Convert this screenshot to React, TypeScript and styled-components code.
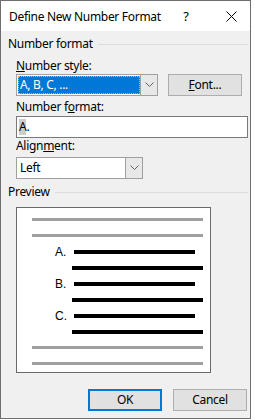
import styled, { createGlobalStyle } from "styled-components";

const GlobalStyle = createGlobalStyle`
  html, body {
    margin: 0;
    padding: 0;
    background: #fff;
  }
  body {
    font-family: "Noto Sans", "Segoe UI", sans-serif;
    font-size: 12px;
    letter-spacing: -0.3px;
    color: #000;
  }
`;

const Chevron = () => (
  <svg width="9" height="6" viewBox="0 0 9 6">
    <polyline points="0.5,0.5 4.5,4.5 8.5,0.5" fill="none" stroke="#606060" strokeWidth="1" />
  </svg>
);

const CloseIcon = () => (
  <svg width="11" height="11" viewBox="0 0 11 11">
    <path d="M0.5 0.5 L10.5 10.5 M10.5 0.5 L0.5 10.5" stroke="#000" strokeWidth="1" />
  </svg>
);

type BarSpec = { indent: number; width: number; tone: "gray" | "black"; letter?: string };

const previewBars: BarSpec[] = [
  { indent: 15, width: 171, tone: "gray" },
  { indent: 15, width: 171, tone: "gray" },
  { indent: 38, width: 121, tone: "black", letter: "A." },
  { indent: 55, width: 131, tone: "black" },
  { indent: 38, width: 121, tone: "black", letter: "B." },
  { indent: 55, width: 131, tone: "black" },
  { indent: 38, width: 121, tone: "black", letter: "C." },
  { indent: 55, width: 131, tone: "black" },
  { indent: 15, width: 171, tone: "gray" },
  { indent: 15, width: 171, tone: "gray" },
];

const App = () => {
  return (
    <>
      <GlobalStyle />
      <Dialog>
        <TitleBar>
          <Title>Define New Number Format</Title>
          <HelpMark>?</HelpMark>
          <CloseIcon />
        </TitleBar>
        <Body>
          <GroupHeader>
            <span>Number format</span>
            <Rule />
          </GroupHeader>
          <Field>
            <Label $top={6}>
              <u>N</u>umber style:
            </Label>
            <ControlRow>
              <Combo $width={142}>
                <ComboText $selected>A, B, C, ...</ComboText>
                <ComboButton>
                  <Chevron />
                </ComboButton>
              </Combo>
              <Button $width={74}>
                <u>F</u>ont...
              </Button>
            </ControlRow>
            <Label $top={3}>
              Number f<u>o</u>rmat:
            </Label>
            <TextInput>
              <Highlight>A</Highlight>.
            </TextInput>
            <Label $top={0}>
              Align<u>m</u>ent:
            </Label>
            <Combo $width={127} $top={3}>
              <ComboText>Left</ComboText>
              <ComboButton>
                <Chevron />
              </ComboButton>
            </Combo>
          </Field>
          <GroupHeader $top={5}>
            <span>Preview</span>
            <Rule />
          </GroupHeader>
          <Field>
            <PreviewBox>
              {previewBars.map((bar, i) => (
                <BarRow key={i} $indent={bar.letter ? bar.indent : 0}>
                  {bar.letter && <Letter>{bar.letter}</Letter>}
                  <Bar
                    $tone={bar.tone}
                    $indent={bar.letter ? 0 : bar.indent}
                    style={{ width: bar.width }}
                  />
                </BarRow>
              ))}
            </PreviewBox>
          </Field>
          <Footer>
            <Button $width={74} $default>
              OK
            </Button>
            <Button $width={74}>Cancel</Button>
          </Footer>
        </Body>
      </Dialog>
    </>
  );
};

export default App;

const Dialog = styled.div`
  width: 251px;
  height: 419px;
  box-sizing: border-box;
  border: 1px solid #6e6e6e;
  display: flex;
  flex-direction: column;
  background: #f0f0f0;
`;

const TitleBar = styled.div`
  height: 30px;
  flex-shrink: 0;
  background: #fff;
  display: flex;
  align-items: center;
  padding: 0 13px 0 8px;
`;

const Title = styled.div`
  flex: 1;
  line-height: 16px;
  margin-top: 1px;
`;

const HelpMark = styled.span`
  width: 10px;
  text-align: center;
  line-height: 16px;
  margin-right: 35px;
  font-size: 13px;
`;

const Body = styled.div`
  flex: 1;
  display: flex;
  flex-direction: column;
  padding: 5px 2px 0 7px;
`;

const GroupHeader = styled.div<{ $top?: number }>`
  display: flex;
  align-items: center;
  gap: 5px;
  line-height: 16px;
  height: 16px;
  margin-top: ${(p) => p.$top ?? 0}px;
`;

const Rule = styled.div`
  flex: 1;
  height: 1px;
  background: #dcdcdc;
`;

const Field = styled.div`
  display: flex;
  flex-direction: column;
  align-items: flex-start;
  padding-left: 8px;
`;

const Label = styled.div<{ $top: number }>`
  line-height: 16px;
  height: 16px;
  margin-top: ${(p) => p.$top}px;
`;

const ControlRow = styled.div`
  display: flex;
  gap: 10px;
`;

const Combo = styled.div<{ $width: number; $top?: number }>`
  width: ${(p) => p.$width}px;
  height: 22px;
  box-sizing: border-box;
  border: 1px solid #a0a0a0;
  background: #fff;
  display: flex;
  margin-top: ${(p) => p.$top ?? 0}px;
`;

const ComboText = styled.div<{ $selected?: boolean }>`
  flex: 1;
  margin: 1px 0 1px 1px;
  padding-left: 2px;
  line-height: 18px;
  background: ${(p) => (p.$selected ? "#0078d7" : "transparent")};
  color: ${(p) => (p.$selected ? "#fff" : "#000")};
  outline: ${(p) => (p.$selected ? "1px dotted #f0a860" : "none")};
  outline-offset: -1px;
`;

const ComboButton = styled.div`
  width: 16px;
  border-left: 1px solid #a0a0a0;
  background: #e8e8e8;
  display: flex;
  align-items: center;
  justify-content: center;
`;

const Button = styled.div<{ $width: number; $default?: boolean }>`
  width: ${(p) => p.$width}px;
  height: 22px;
  box-sizing: border-box;
  border: ${(p) => (p.$default ? "2px solid #0078d7" : "1px solid #adadad")};
  background: #e1e1e1;
  display: flex;
  align-items: center;
  justify-content: center;
  line-height: 16px;
`;

const TextInput = styled.div`
  align-self: stretch;
  height: 22px;
  margin-top: 1px;
  box-sizing: border-box;
  border: 1px solid #7a7a7a;
  background: #fff;
  padding-left: 2px;
  display: flex;
  align-items: center;
  line-height: 16px;
`;

const Highlight = styled.span`
  background: #cccccc;
`;

const PreviewBox = styled.div`
  width: 195px;
  height: 166px;
  margin-top: 7px;
  box-sizing: border-box;
  border: 1px solid #696969;
  background: #fff;
  padding-top: 10px;
  display: flex;
  flex-direction: column;
  gap: 12px;
`;

const BarRow = styled.div<{ $indent: number }>`
  height: 4px;
  display: flex;
  align-items: flex-start;
  padding-left: ${(p) => p.$indent}px;
`;

const Letter = styled.span`
  width: 19px;
  font-family: "Liberation Sans", Arial, sans-serif;
  font-size: 12px;
  letter-spacing: 0;
  line-height: 12px;
  margin-top: -4px;
`;

const Bar = styled.div<{ $tone: "gray" | "black"; $indent: number }>`
  height: ${(p) => (p.$tone === "gray" ? 3 : 4)}px;
  margin-left: ${(p) => p.$indent}px;
  background: ${(p) => (p.$tone === "gray" ? "#a0a0a0" : "#000")};
`;

const Footer = styled.div`
  display: flex;
  justify-content: flex-end;
  gap: 11px;
  margin-top: 16px;
  padding-right: 1px;
`;
